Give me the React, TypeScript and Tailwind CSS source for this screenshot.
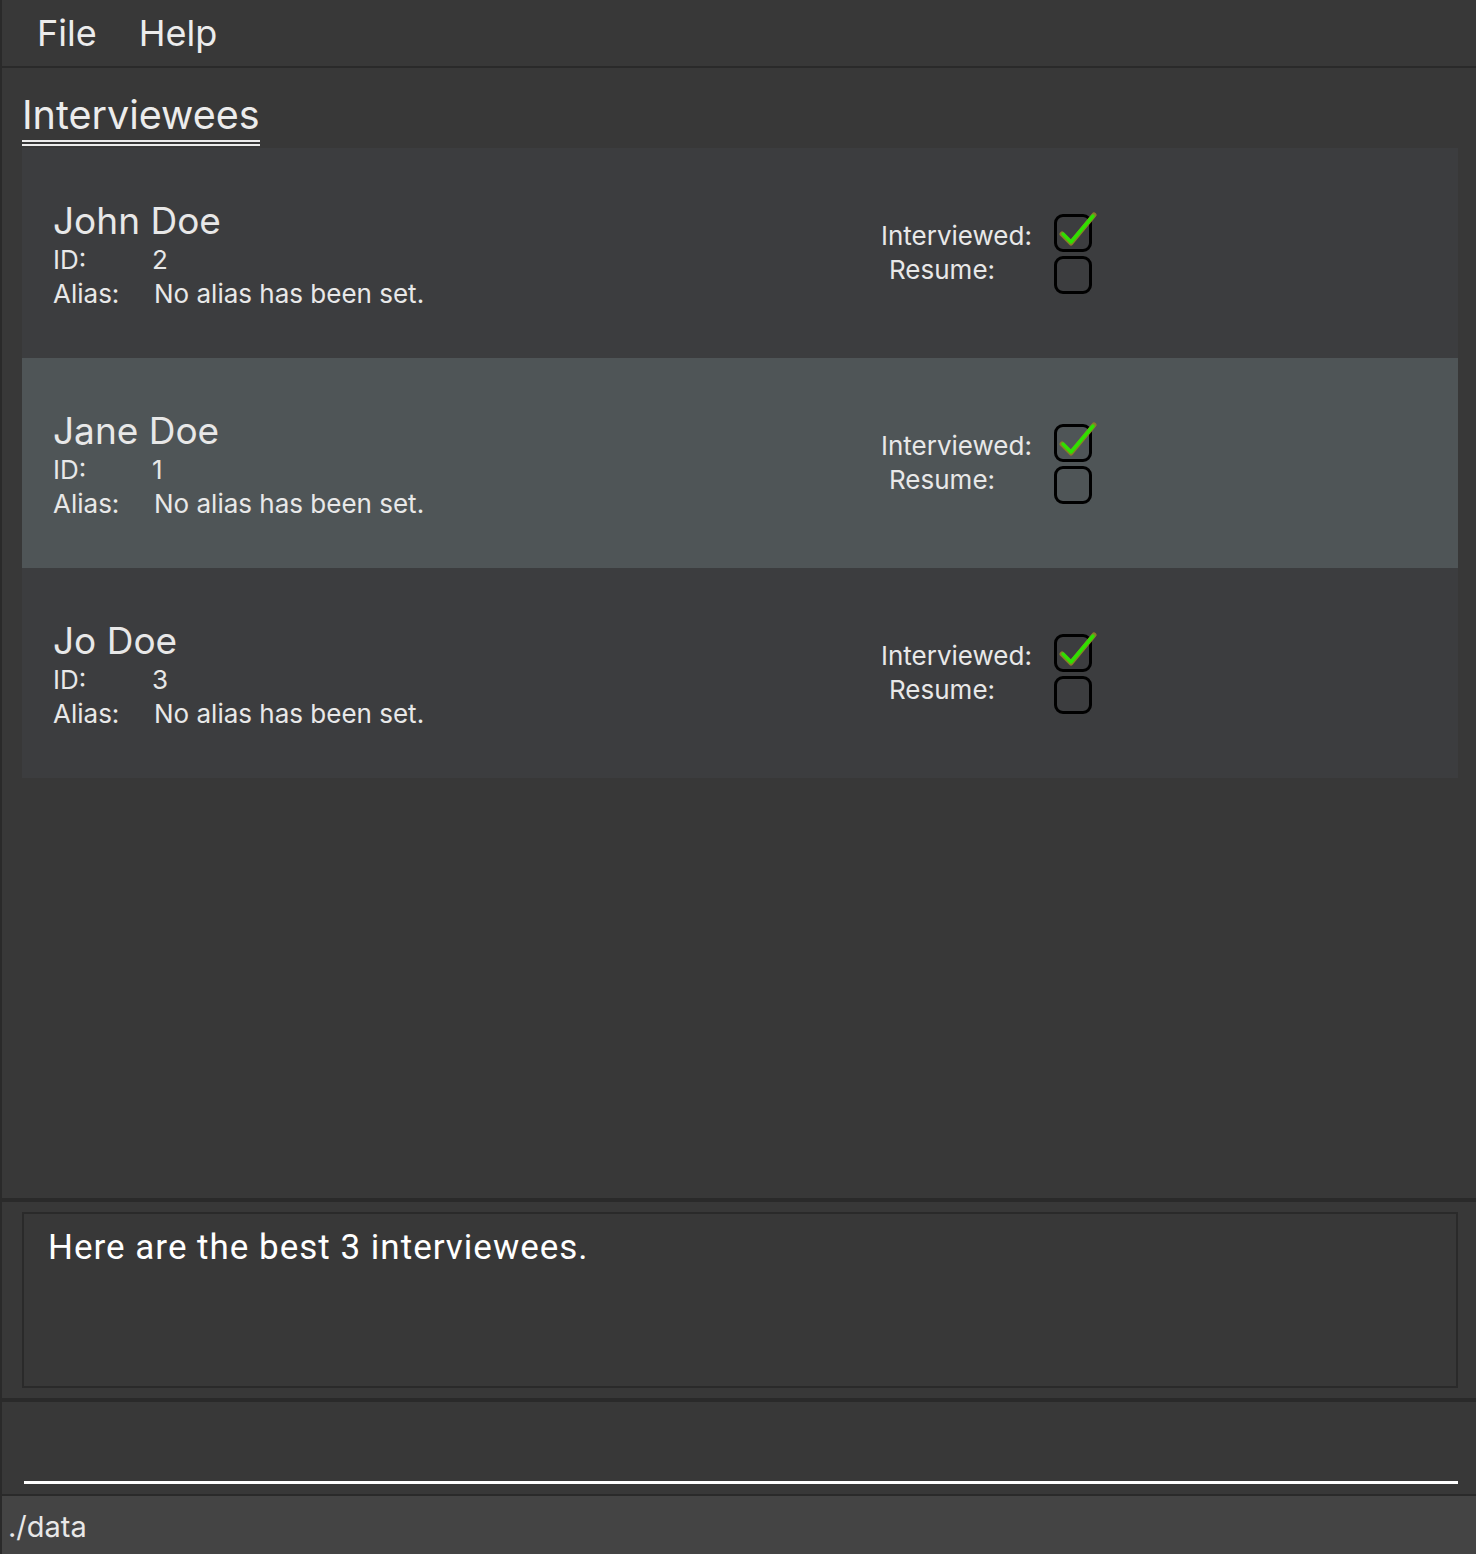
import { Fragment } from 'react'

const people = [
  { name: 'John Doe', id: 2, selected: false },
  { name: 'Jane Doe', id: 1, selected: true },
  { name: 'Jo Doe', id: 3, selected: false },
]

function Box({ checked }: { checked?: boolean }) {
  return (
    <div className="relative w-[38px] h-[38px] rounded-[9px] border-[3px] border-black">
      {checked && (
        <svg className="absolute -top-[5px] left-[1px]" width="40" height="40" viewBox="0 0 40 40">
          <path d="M4 22 L13 31 L36 3" fill="none" stroke="#8a7a2a" strokeWidth="5" strokeLinecap="round" strokeLinejoin="round" />
          <path d="M5 22 L13 30 L35 4" fill="none" stroke="#2fe000" strokeWidth="3.5" strokeLinecap="round" strokeLinejoin="round" />
        </svg>
      )}
    </div>
  )
}

function Card({ name, id, selected }: { name: string; id: number; selected: boolean }) {
  return (
    <div className={`h-[210px] flex items-start pl-[31px] pt-[50px] ${selected ? 'bg-[#4f5557]' : 'bg-[#3c3d3f]'}`}>
      <div className="w-[828px] text-[#e8e8e8]">
        <div className="text-[37px] leading-[45px]">{name}</div>
        <div className="grid grid-cols-[101px_1fr] text-[26px] leading-[34px]">
          <span>ID:</span>
          <span className="-ml-[2px]">{id}</span>
          <span>Alias:</span>
          <span>No alias has been set.</span>
        </div>
      </div>
      <div className="flex gap-[22px]">
        <div className="flex flex-col text-[26px] leading-[34px] text-[#e8e8e8] pt-[21px]">
          <span>Interviewed:</span>
          <span className="pl-[8px]">Resume:</span>
        </div>
        <div className="flex flex-col gap-[4px] pt-[16px]">
          <Box checked />
          <Box />
        </div>
      </div>
    </div>
  )
}

export default function App() {
  return (
    <div className="w-[1476px] h-[1554px] flex flex-col bg-[#383838] border-l-2 border-[#2a2a2a] font-['Inter','Noto_Sans',sans-serif] overflow-hidden">
      {/* menu */}
      <div className="h-[68px] shrink-0 flex items-center gap-[42px] pl-[35px] text-[36px] text-[#ececec] border-b-2 border-[#2a2a2a]">
        <span>File</span>
        <span>Help</span>
      </div>

      {/* list */}
      <div className="h-[1130px] shrink-0 pl-[20px] pr-[18px] pt-[26px]">
        <div className="inline-block text-[39.5px] leading-[42px] text-[#ececec] pb-[4px] border-b-[6px] border-double border-[#ececec]">
          Interviewees
        </div>
        <div className="mt-[2px]">
          {people.map((p) => (
            <Fragment key={p.id}>
              <Card {...p} />
            </Fragment>
          ))}
        </div>
      </div>

      {/* result */}
      <div className="h-[200px] shrink-0 border-t-[4px] border-[#2a2a2a] py-[10px] pl-[20px] pr-[18px]">
        <div className="h-full border-2 border-[#2a2a2a] pl-[24px] pt-[14px] text-[35px] leading-[40px] tracking-[1px] text-white font-['Roboto',sans-serif]">
          Here are the best 3 interviewees.
        </div>
      </div>

      {/* command */}
      <div className="h-[98px] shrink-0 border-t-[4px] border-b-2 border-[#2a2a2a] pl-[22px] pr-[18px] flex items-end pb-[10px]">
        <div className="w-full h-[3px] bg-white" />
      </div>

      {/* status */}
      <div className="flex-1 bg-[#444444] pl-[6px] pt-[13px] text-[29px] leading-[36px] text-[#e8e8e8]">
        ./data
      </div>
    </div>
  )
}
